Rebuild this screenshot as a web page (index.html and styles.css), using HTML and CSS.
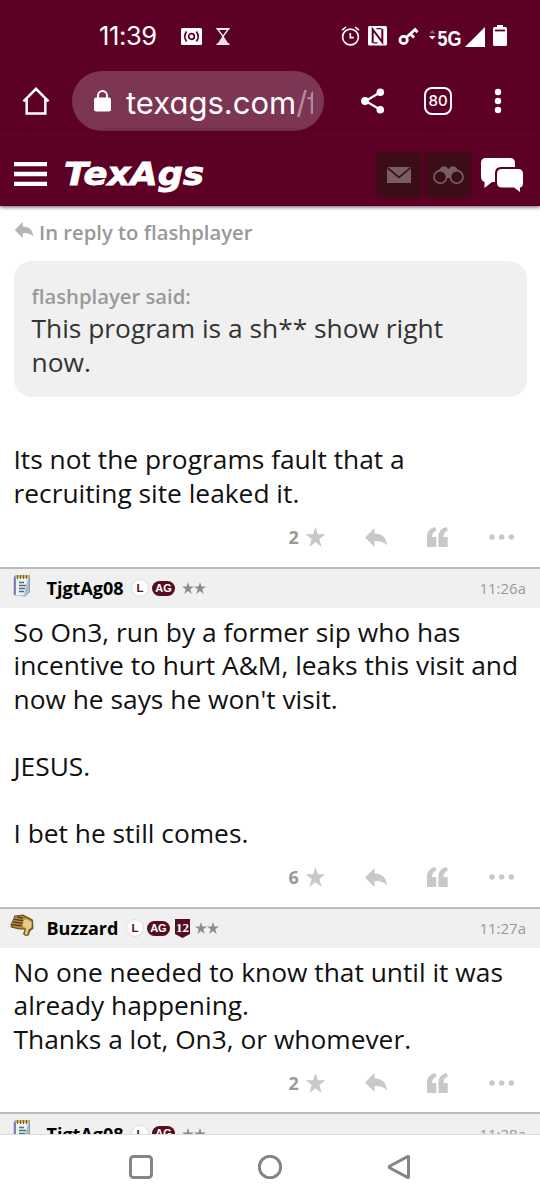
FILE: index.html
```html
<!DOCTYPE html>
<html lang="en">
<head>
<meta charset="utf-8">
<title>TexAgs</title>
<link rel="stylesheet" href="styles.css">
</head>
<body>
<svg class="defs" width="0" height="0" aria-hidden="true">
  <symbol id="star" viewBox="0 0 20 20"><path d="M10 0l2.400 7.300H20l-6.200 4.600L16.200 20 10 15.200 3.800 20l2.400-8.100L0 7.300h7.600z"/></symbol>
  <symbol id="reply" viewBox="0 0 22 19"><path d="M0 9.500L9.500 0v5.400C17 5.600 21.500 9.500 22 17.300 18.500 13.600 14.500 12.800 9.500 13.100V19z"/></symbol>
  <symbol id="quote" viewBox="0 0 21 20"><path d="M0 20V10C0 4.500 3 1 8.200 0l1.300 3.600C6.500 4.800 5 7 5 10h4.300v10zM11.400 20V10c0-5.500 3-9 8.200-10l1.300 3.600c-3 1.200-4.500 3.400-4.500 6.400h4.300v10z"/></symbol>
  <symbol id="dots" viewBox="0 0 26 6"><circle cx="3" cy="3" r="2.700"/><circle cx="12.700" cy="3" r="2.700"/><circle cx="22.300" cy="3" r="2.700"/></symbol>
  <symbol id="notepad" viewBox="0 0 18 24">
    <path d="M1 2.500L3 1h14v17l-5 4.500L2 21.500z" fill="#8c91b8"/>
    <path d="M3 3h12.500v15l-4 3.500H3z" fill="#e9f3f5"/>
    <path d="M15.500 3v15l-4 3.500v-3.500z" fill="#a9bcc4"/>
    <path d="M1.500 3v18" stroke="#7476b5" stroke-width="1.500"/>
    <path d="M2.500 2.500h14" stroke="#d5b45e" stroke-width="3"/>
    <path d="M4.500 1v4M7.500 1v4M10.500 1v4M13.500 1v4" stroke="#73602e"/>
    <path d="M6 8.500h5M6 11.500h7M6 14.500h6M6 17.500h5" stroke="#4f7074" stroke-width="1.400"/>
  </symbol>
  <symbol id="thumb" viewBox="0 0 24 24">
    <path d="M4 1.500L13 .5l6 3 4.500 2.500.5 9-3.500 3-1.500 4.500-3.500.5-2.500-2 1.500-4.500-7-.5-7-2L0 11l2-4z" fill="#77582c"/>
    <path d="M5 2.500l7.500-.5 6 3 3.500 2v7l-3 3-1.500 4.500-2 .5-1-1.500 1.500-5.500-8-.5-5.500-1.500L1.500 10l2-4z" fill="#b98a43"/>
    <path d="M14 6l3.500-.5 4.500 3v5l-3.500 3-1 4.500-1.500.5-.7-1 1.200-5.500-4-2.500z" fill="#ebc987"/>
    <path d="M4 5.500l9 1.500M2.500 8.300l10 1.500M2.200 11l9.500 1.500M7 3l6 1.500" stroke="#4d381b" stroke-width="1.300" fill="none"/>
  </symbol>
</svg>
<div class="phone">
  <div class="status">
    <span class="time">11:39</span>
    <svg class="s-cast" width="21" height="17" viewBox="0 0 21 17"><rect width="21" height="17" rx="1.500" fill="#fff"/><g fill="none" stroke="#5c0025" stroke-width="1.700"><circle cx="10.500" cy="8.500" r="2.800"/><path d="M5.600 3.500q-3.600 5 0 10M15.400 3.500q3.600 5 0 10"/></g></svg>
    <svg class="s-glass" width="14" height="17" viewBox="0 0 14 17"><path d="M1.500 1h11L7 8.500z" fill="none" stroke="#fff" stroke-width="1.300"/><path d="M.5.800h13M.5 16.200h13" stroke="#fff" stroke-width="1.400"/><path d="M7 7.500L13 16.500H1z" fill="#f3dfe8"/></svg>
    <svg class="s-alarm" width="19" height="20" viewBox="0 0 19 20"><g fill="none" stroke="#fff" stroke-width="1.600"><circle cx="9.500" cy="11" r="7.900"/><path d="M9.300 7v4.600h3.500M1 4.200L5 1M18 4.200L14 1"/></g></svg>
    <svg class="s-nfc" width="19" height="20" viewBox="0 0 19 20"><rect width="19" height="19.500" rx="1.500" fill="#fff"/><path d="M4.700 17V3.500l9.600 12.500V3" fill="none" stroke="#5c0025" stroke-width="2"/><path d="M8.500 2.700h5M5.500 16.800h4" stroke="#5c0025" stroke-width="1.200"/></svg>
    <svg class="s-key" width="21" height="19" viewBox="0 0 21 19"><g fill="none" stroke="#fff" stroke-width="2.800"><circle cx="5.600" cy="13" r="3.700"/><path d="M8.300 10.500L17 2.500l2.500 2.800M12.500 7l3.500 3.500"/></g></svg>
    <svg class="s-net" width="34" height="20" viewBox="0 0 34 20"><path d="M0 5.500L3.300 2l3.300 3.500z" fill="#965872"/><path d="M0 8h6.600L3.300 11.500z" fill="#fff"/><text x="8.500" y="18" class="net-label" textLength="24" lengthAdjust="spacingAndGlyphs">5G</text></svg>
    <svg class="s-signal" width="20" height="20" viewBox="0 0 20 20"><path d="M20 0v20H0z" fill="#fff"/></svg>
    <svg class="s-batt" width="14" height="21" viewBox="0 0 14 21"><path d="M4 0h6v2h2.500Q14 2 14 3.500v16q0 1.500-1.500 1.500h-11Q0 21 0 19.500v-16Q0 2 1.500 2H4z" fill="#fff"/><path d="M2 5.500h10" stroke="#5c0025" stroke-width="1.800"/></svg>
  </div>
  <div class="browser">
    <svg class="home" width="28" height="28" viewBox="0 0 28 28"><path d="M1.500 14.300L14 1.800l12.500 12.500M4.700 12v14.500h18.600V12" fill="none" stroke="#fff" stroke-width="2.500"/></svg>
    <div class="url">
      <svg width="17" height="22" viewBox="0 0 17 22"><rect y="7.500" width="17" height="14" rx="2" fill="#fff"/><path d="M4 9V5.500a4.500 4.500 0 0 1 9 0V9" fill="none" stroke="#fff" stroke-width="1.900"/></svg>
      <span class="address">texags.com<span class="path">/f</span></span>
    </div>
    <svg class="share" width="24" height="26" viewBox="0 0 24 26"><path d="M19 4.500L4.500 13 19 21.500" fill="none" stroke="#fff" stroke-width="2.200"/><g fill="#fff"><circle cx="19.300" cy="4.300" r="3.800"/><circle cx="4" cy="13" r="3.900"/><circle cx="19.300" cy="21.700" r="3.800"/></g></svg>
    <span class="tabs">80</span>
    <svg class="kebab" width="8" height="26" viewBox="0 0 8 26"><g fill="#fff"><circle cx="4" cy="4" r="3.200"/><circle cx="4" cy="13" r="3.200"/><circle cx="4" cy="22" r="3.200"/></g></svg>
  </div>
  <header class="site">
    <svg class="burger" width="33" height="24" viewBox="0 0 33 24"><path d="M0 2h33M0 12h33M0 22h33" stroke="#fff" stroke-width="4.400"/></svg>
    <svg class="logo" width="144" height="42" viewBox="0 0 144 42"><text x="1" y="31" class="logo-text" textLength="140" lengthAdjust="spacingAndGlyphs">TexAgs</text></svg>
    <span class="tile mail"><svg width="24" height="16" viewBox="0 0 24 16"><rect width="24" height="16" fill="#785d65"/><path d="M0 .500l12 10 12-10" fill="none" stroke="#3b0d17" stroke-width="1.700"/></svg></span>
    <span class="tile"><svg width="31" height="20" viewBox="0 0 31 20"><path d="M3 8L9 1.500h4L15.500 4 18 1.500h4L28 8l-8.500 5h-8z" fill="#785d65"/><g fill="#3b0d17" stroke="#785d65" stroke-width="1.700"><circle cx="7.300" cy="12" r="6.300"/><circle cx="23.700" cy="12" r="6.300"/></g></svg></span>
    <svg class="chat" width="43" height="36" viewBox="0 0 43 36"><path d="M6 1h24q5 0 5 5v4H21q-6 0-6 6v9h-3L4.500 31V25Q1 24 1 19V6q0-5 5-5z" fill="#fff"/><path d="M22 12h16q5 0 5 5v9q0 4-3 4.500V35l-6-4.500H22q-5 0-5-5V17q0-5 5-5z" fill="#fff"/></svg>
  </header>
  <main class="thread">
    <article class="post first">
      <div class="inreply"><svg width="20" height="16"><use href="#reply"/></svg><span>In reply to flashplayer</span></div>
      <blockquote class="quote"><div class="said">flashplayer said:</div><div class="qtext">This program is a sh** show right<br>now.</div></blockquote>
      <div class="text">Its not the programs fault that a<br>recruiting site leaked it.</div>
      <div class="actions"><b>2</b><svg class="a-star" width="21" height="20"><use href="#star"/></svg><svg class="a-reply" width="22" height="19"><use href="#reply"/></svg><svg class="a-quote" width="21" height="20"><use href="#quote"/></svg><svg class="a-dots" width="26" height="6"><use href="#dots"/></svg></div>
    </article>
    <article class="post">
      <div class="head"><svg class="avatar" width="18" height="24"><use href="#notepad"/></svg><span class="name">TjgtAg08</span><span class="l">L</span><span class="ag">AG</span><span class="stars"><svg width="12" height="12"><use href="#star"/></svg><svg width="12" height="12"><use href="#star"/></svg></span><time>11:26a</time></div>
      <div class="text">So On3, run by a former sip who has<br>incentive to hurt A&amp;M, leaks this visit and<br>now he says he won't visit.<br><br>JESUS.<br><br>I bet he still comes.</div>
      <div class="actions"><b>6</b><svg class="a-star" width="21" height="20"><use href="#star"/></svg><svg class="a-reply" width="22" height="19"><use href="#reply"/></svg><svg class="a-quote" width="21" height="20"><use href="#quote"/></svg><svg class="a-dots" width="26" height="6"><use href="#dots"/></svg></div>
    </article>
    <article class="post">
      <div class="head buzz"><svg class="avatar" width="24" height="23"><use href="#thumb"/></svg><span class="name">Buzzard</span><span class="l">L</span><span class="ag">AG</span><svg class="twelve" width="15" height="19" viewBox="0 0 15 19"><path d="M0 0h15v15l-7.500 4L0 15z" fill="#560d22"/><text x="7.500" y="12.500" text-anchor="middle" class="twelve-text">12</text></svg><span class="stars"><svg width="12" height="12"><use href="#star"/></svg><svg width="12" height="12"><use href="#star"/></svg></span><time>11:27a</time></div>
      <div class="text">No one needed to know that until it was<br>already happening.<br>Thanks a lot, On3, or whomever.</div>
      <div class="actions"><b>2</b><svg class="a-star" width="21" height="20"><use href="#star"/></svg><svg class="a-reply" width="22" height="19"><use href="#reply"/></svg><svg class="a-quote" width="21" height="20"><use href="#quote"/></svg><svg class="a-dots" width="26" height="6"><use href="#dots"/></svg></div>
    </article>
    <article class="post">
      <div class="head"><svg class="avatar" width="18" height="24"><use href="#notepad"/></svg><span class="name">TjgtAg08</span><span class="l">L</span><span class="ag">AG</span><span class="stars"><svg width="12" height="12"><use href="#star"/></svg><svg width="12" height="12"><use href="#star"/></svg></span><time>11:28a</time></div>
    </article>
  </main>
  <nav class="sysnav">
    <svg width="24" height="24" viewBox="0 0 24 24"><rect x="1.500" y="1.500" width="21" height="21" rx="3"/></svg>
    <svg width="24" height="24" viewBox="0 0 24 24"><circle cx="12" cy="12" r="10.700"/></svg>
    <svg width="24" height="24" viewBox="0 0 24 24"><path d="M21.500 2v20q0 .8-1 .4L3 13q-1.500-1 0-2L20.500 1.600q1-.4 1 .4z"/></svg>
  </nav>
</div>
</body>
</html>
```
FILE: styles.css
```css
* { box-sizing: border-box; }
body { margin: 0; font-family: "Open Sans", "Noto Sans", sans-serif; background: #fff; }
svg { display: block; flex: none; }
.defs { position: absolute; }
.phone { width: 540px; height: 1200px; display: flex; flex-direction: column; overflow: hidden; }

.status { height: 71px; background: #5c0025; display: flex; align-items: center; flex: none; padding: 1px 0 0 99px; }
.time { width: 58px; font: 400 25.500px/30px Inter, sans-serif; letter-spacing: -.4px; color: #fff; white-space: nowrap; }
.s-cast { margin-left: 24px; }
.s-glass { margin-left: 14px; }
.s-alarm { margin-left: 111px; }
.s-nfc { margin-left: 8px; }
.s-key { margin-left: 11px; }
.s-net { margin: 4px 0 0 10px; overflow: visible; }
.s-signal { margin: 1px 0 0 2px; }
.s-batt { margin: -1px 0 0 8px; }
.net-label { font: 700 22px "Liberation Sans", sans-serif; fill: #fff; }

.browser { height: 60px; background: #5c0025; display: flex; align-items: center; flex: none; padding-left: 22px; }
.url { width: 252px; height: 60px; margin-left: 22px; padding-left: 22px; border-radius: 30px; background: #7c3552; display: flex; align-items: center; overflow: hidden; }
.address { margin: 3px 0 0 15px; width: 187px; overflow: hidden; font: 400 31px/40px Inter, sans-serif; font-feature-settings: "cv11"; color: #fff; white-space: nowrap; }
.path { color: #b58a9d; }
.share { margin-left: 37px; }
.tabs { width: 28px; height: 28px; margin-left: 39px; border: 2.500px solid #fff; border-radius: 8px; font: 500 15px/23px Inter, sans-serif; color: #fff; display: flex; justify-content: center; }
.kebab { margin-left: 42px; }

.site { height: 75px; background: #5c0025; display: flex; align-items: center; flex: none; padding: 13px 0 0 14px; box-shadow: 0 1px 4px rgba(40, 0, 20, .7); position: relative; }
.burger { margin-top: -3px; }
.logo { margin: 0 0 0 16px; overflow: visible; }
.logo-text { font: italic 700 32px "DejaVu Sans", sans-serif; fill: #fff; stroke: #fff; stroke-width: .9px; }
.tile { width: 44px; height: 44px; margin-left: 5px; background: #3b0d17; border-radius: 2px; display: flex; align-items: center; justify-content: center; box-shadow: 0 0 3px #3b0d17; }
.mail { margin-left: 170px; }
.chat { margin-left: 10px; }

.thread { flex: 1; overflow: hidden; min-height: 0; }
.first { padding-top: 12px; }
.inreply { display: flex; align-items: center; height: 28px; margin-left: 14px; gap: 5px; color: #999; font-size: 20.250px; font-weight: 600; }
.inreply svg { fill: #b4b4b4; margin-top: -5px; }
.quote { margin: 15px 13.500px 0 13.500px; height: 136px; padding: 22px 18px 0; border-radius: 18px; background: #f0f0f0; }
.said { font-size: 20.250px; line-height: 26px; font-weight: 600; color: #999; }
.qtext { font-size: 26.350px; line-height: 33.900px; margin-top: 3.300px; color: #333; }
.text { font-size: 26.330px; line-height: 33.550px; padding: 8px 0 0 13.500px; color: #111; white-space: nowrap; }
.first .text { padding-top: 46px; }

.actions { display: flex; align-items: center; height: 56.500px; padding: 0 0 2px 288.500px; fill: #c8c8c8; color: #999; font-size: 18px; }
.actions b { width: 12px; }
.a-star { margin-left: 4px; }
.a-reply { margin-left: 39px; }
.a-quote { margin-left: 40px; }
.a-dots { margin-left: 41px; }
.post:not(.first) .actions { height: 56.200px; padding-bottom: 3px; }

.head { height: 41px; border-top: 2px solid #bbb; background: #f0f0f0; display: flex; align-items: center; padding: 0 14px 0 13px; }
.avatar { margin-top: -5px; }
.name { margin-left: 15.500px; font-size: 18px; font-weight: 700; color: #000; }
.buzz { padding-left: 10px; }
.buzz .name { margin-left: 12.500px; }
.l { width: 18px; height: 18px; margin-left: 7.500px; border-radius: 50%; background: #fff; border: 1px solid #ddd; font: 700 11.500px/16px "Liberation Sans", sans-serif; color: #560d22; text-align: center; }
.ag { width: 23px; height: 15px; margin-left: 3px; border-radius: 8px; background: #560d22; font: 700 11px/15px "Liberation Sans", sans-serif; color: #fff; text-align: center; }
.twelve { margin-left: 5px; }
.twelve-text { font: 700 13px "Liberation Serif", serif; fill: #fff; }
.stars { display: flex; margin-left: 7px; fill: #8c8c8c; }
.buzz .stars { margin-left: 5px; }
.head time { margin-left: auto; font-size: 15px; color: #999; }

.sysnav { height: 66px; flex: none; border-top: 1px solid #ddd; background: #fff; display: flex; justify-content: center; align-items: center; gap: 105px; padding-bottom: 2px; fill: none; stroke: #858585; stroke-width: 3px; }
```
